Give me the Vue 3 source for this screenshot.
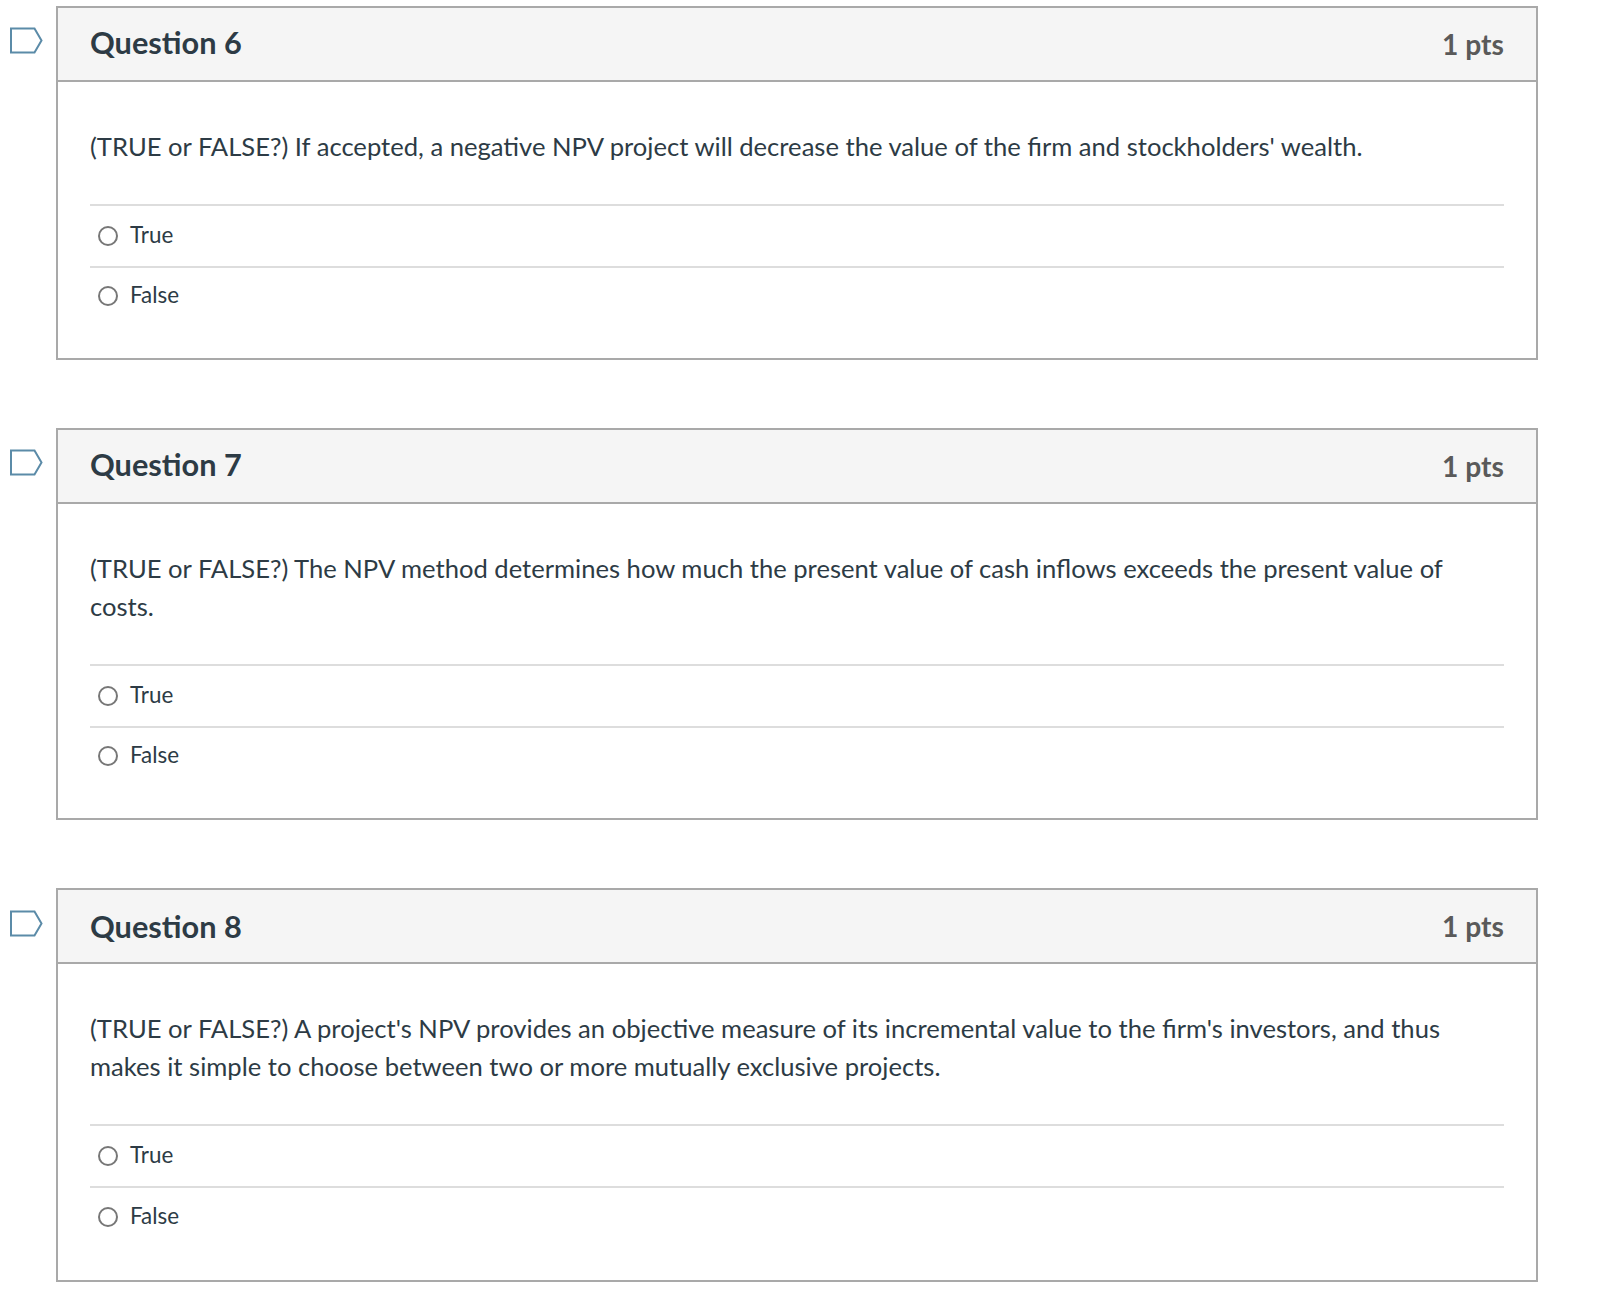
<template>
  <div class="page">
    <div class="question-row" v-for="q in questions" :key="q.id">
      <svg class="flag" width="33" height="27" viewBox="0 0 33 27">
        <path d="M1 1.5H24.5L31.5 13.5L24.5 25.5H1Z" fill="#fff" stroke="#5b8ba8" stroke-width="2" />
      </svg>
      <div class="question">
        <div class="header">
          <div class="title">{{ q.title }}</div>
          <div class="pts">1 pts</div>
        </div>
        <div class="body">
          <p class="text">{{ q.text }}</p>
          <div class="answer" v-for="a in answers" :key="a">
            <span class="radio"></span>
            <span class="label">{{ a }}</span>
          </div>
        </div>
      </div>
    </div>
  </div>
</template>

<script setup>
const answers = ['True', 'False']

const questions = [
  {
    id: 6,
    title: 'Question 6',
    text: "(TRUE or FALSE?) If accepted, a negative NPV project will decrease the value of the firm and stockholders' wealth."
  },
  {
    id: 7,
    title: 'Question 7',
    text: '(TRUE or FALSE?) The NPV method determines how much the present value of cash inflows exceeds the present value of costs.'
  },
  {
    id: 8,
    title: 'Question 8',
    text: "(TRUE or FALSE?) A project's NPV provides an objective measure of its incremental value to the firm's investors, and thus makes it simple to choose between two or more mutually exclusive projects."
  }
]
</script>

<style scoped>
.page {
  padding-top: 6px;
  width: 1604px;
  height: 1306px;
  box-sizing: border-box;
  overflow: hidden;
  font-family: Lato, "Liberation Sans", sans-serif;
  color: #2d3b45;
  background: #fff;
}
.question-row {
  display: flex;
  align-items: flex-start;
  margin-bottom: 68px;
}
.flag {
  margin: 21px 0 0 10px;
  flex: none;
}
.question {
  margin-left: 13px;
  width: 1482px;
  box-sizing: border-box;
  border: 2px solid #a9a9a9;
}
.header {
  display: flex;
  justify-content: space-between;
  align-items: center;
  height: 74px;
  box-sizing: border-box;
  padding: 0 32px;
  background: #f5f5f5;
  border-bottom: 2px solid #a9a9a9;
}
.title {
  font-size: 30.7px;
  font-weight: 700;
  margin-top: -3px;
}
.pts {
  font-size: 28.2px;
  font-weight: 700;
  color: #5a5a5a;
  margin-top: -1px;
}
.body {
  padding: 45px 32px 34px;
}
.text {
  margin: 0;
  font-size: 25.6px;
  line-height: 38px;
  padding-bottom: 39px;
  border-bottom: 2px solid #ddd;
}
.answer {
  display: flex;
  align-items: center;
  height: 60px;
  box-sizing: border-box;
  padding-left: 8px;
}
.answer + .answer {
  height: 58px;
  border-top: 2px solid #ddd;
}
.radio {
  width: 20px;
  height: 20px;
  box-sizing: border-box;
  border: 2px solid #777;
  border-radius: 50%;
  margin-right: 12px;
}
.label {
  font-size: 22.4px;
  margin-top: -3px;
}
.question-row:last-child .flag {
  margin-top: 22px;
}
.question-row:last-child .title {
  margin-top: 0;
}
.question-row:last-child .answer + .answer {
  height: 60px;
}
</style>
